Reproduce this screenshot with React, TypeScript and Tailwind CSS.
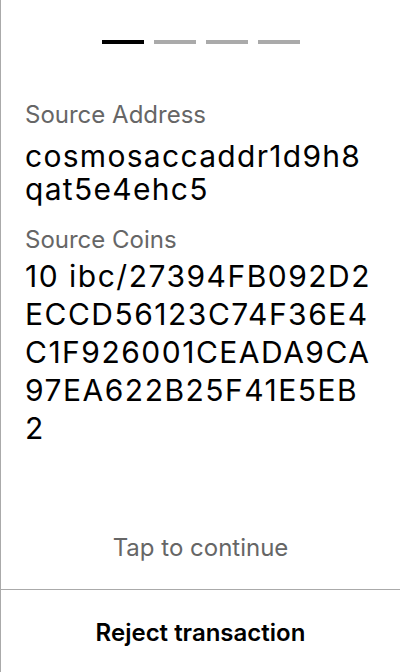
import React from "react";

const steps = [true, false, false, false];

// line breaks follow the reference wrapping
const address = ["cosmosaccaddr1d9h8", "qat5e4ehc5"];
const coins = [
  "10 ibc/27394FB092D2",
  "ECCD56123C74F36E4",
  "C1F926001CEADA9CA",
  "97EA622B25F41E5EB",
  "2",
];

export default function App() {
  return (
    <div className="flex h-[672px] w-[400px] flex-col border-l border-[#aaa] bg-white font-['Inter',sans-serif] text-black">
      {/* Step indicator */}
      <div className="flex justify-center gap-[10px] pt-10">
        {steps.map((active, i) => (
          <div
            key={i}
            className={active ? "h-1 w-[42px] bg-black" : "h-1 w-[42px] bg-[#aaa]"}
          />
        ))}
      </div>

      {/* Fields */}
      <div className="px-6 pt-[57px]">
        <p className="text-[24px] leading-[28px] text-[#666]">Source Address</p>
        <p className="mt-[11px] text-[30px] leading-[33px] tracking-[1.3px]">
          {address.map((line) => (
            <span key={line} className="block whitespace-nowrap">
              {line}
            </span>
          ))}
        </p>
        <p className="mt-[20px] text-[24px] leading-[28px] text-[#666]">Source Coins</p>
        <p className="mt-[3px] text-[30px] leading-[38px] tracking-[1.5px]">
          {coins.map((line) => (
            <span key={line} className="block whitespace-nowrap">
              {line}
            </span>
          ))}
        </p>
      </div>

      <div className="flex-1" />

      <p className="pb-[27px] text-center text-[24px] leading-[28px] text-[#666]">Tap to continue</p>

      <button className="flex h-[83px] items-center justify-center border-t border-[#aaa] pt-1 text-[24px] font-semibold leading-[28px]">
        Reject transaction
      </button>
    </div>
  );
}
